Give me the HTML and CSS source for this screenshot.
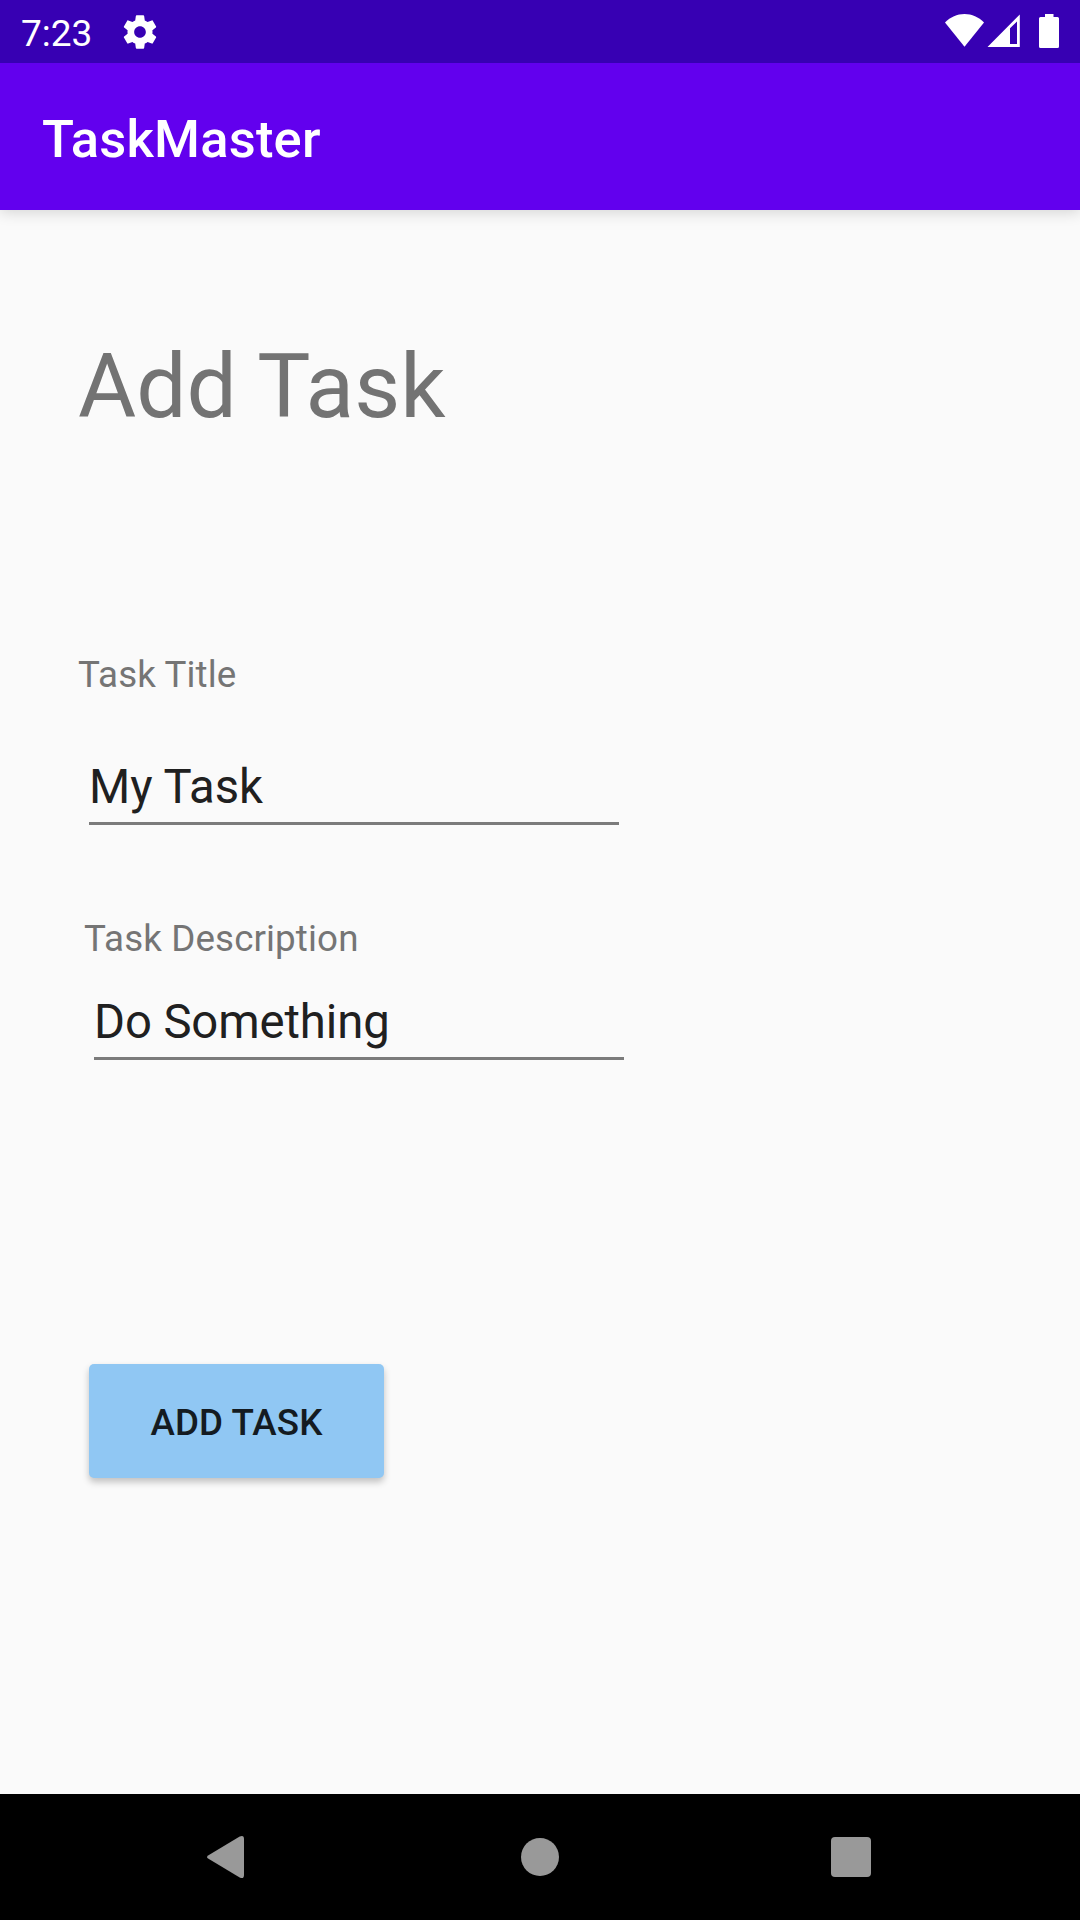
FILE: index.html
```html
<!DOCTYPE html>
<html lang="en">
<head>
<meta charset="utf-8">
<title>TaskMaster</title>
<link rel="stylesheet" href="styles.css">
</head>
<body>
<div class="screen">
  <div class="status-bar">
    <span class="clock">7:23</span>
    <svg class="gear" viewBox="0 0 24 24"><path d="M19.43 12.98c.04-.32.07-.64.07-.98s-.03-.66-.07-.98l2.11-1.65c.19-.15.24-.42.12-.64l-2-3.46c-.12-.22-.39-.3-.61-.22l-2.49 1c-.52-.4-1.08-.73-1.69-.98l-.38-2.65C14.46 2.18 14.25 2 14 2h-4c-.25 0-.46.18-.49.42l-.38 2.65c-.61.25-1.17.59-1.69.98l-2.49-1c-.23-.09-.49 0-.61.22l-2 3.46c-.13.22-.07.49.12.64l2.11 1.65c-.04.32-.07.65-.07.98s.03.66.07.98l-2.11 1.65c-.19.15-.24.42-.12.64l2 3.46c.12.22.39.3.61.22l2.49-1c.52.4 1.08.73 1.69.98l.38 2.65c.03.24.24.42.49.42h4c.25 0 .46-.18.49-.42l.38-2.65c.61-.25 1.17-.59 1.69-.98l2.49 1c.23.09.49 0 .61-.22l2-3.46c.12-.22.07-.49-.12-.64l-2.11-1.65zM12 15.5c-1.93 0-3.5-1.57-3.5-3.5s1.57-3.5 3.500-3.500 3.500 1.570 3.500 3.500-1.570 3.500-3.500 3.500z"/></svg>
    <svg class="indicators" viewBox="0 0 116 36">
      <path d="M0 9.5C5.500 4 12 1 19.500 1S33.500 4 39 9.500L19.500 33.700z"/>
      <path fill-rule="evenodd" d="M42.500 34L74.800 1.500V34zM65 15.200V31h7V8.500z"/>
      <path d="M100 1h8.500v3h4a1.500 1.500 0 0 1 1.500 1.500v28a1.500 1.500 0 0 1-1.500 1.500h-17a1.500 1.500 0 0 1-1.500-1.500v-28a1.500 1.500 0 0 1 1.500-1.500h4.500z"/>
    </svg>
  </div>
  <header class="app-bar"><span class="app-title">TaskMaster</span></header>
  <main class="content">
    <h1 class="heading">Add Task</h1>
    <div class="field">
      <label class="label" for="title">Task Title</label>
      <input class="input" id="title" type="text" value="My Task">
    </div>
    <div class="field field-description">
      <label class="label" for="description">Task Description</label>
      <input class="input input-description" id="description" type="text" value="Do Something">
    </div>
    <button class="button" type="button">ADD TASK</button>
  </main>
  <nav class="nav-bar">
    <svg class="nav-icon" viewBox="0 0 48 48"><path d="M3.500 22.200L34.700 3.500Q39 1.500 39 6V42Q39 46.500 34.700 44.500L3.500 25.800Q.5 24 3.500 22.200z"/></svg>
    <svg class="nav-icon" viewBox="0 0 48 48"><circle cx="24" cy="24" r="19"/></svg>
    <svg class="nav-icon" viewBox="0 0 48 48"><rect x="4" y="4" width="40" height="40" rx="4"/></svg>
  </nav>
</div>
</body>
</html>
```
FILE: styles.css
```css
* { box-sizing: border-box; }
body {
  margin: 0;
  background: #fafafa;
  font-family: Roboto, sans-serif;
}
.screen {
  width: 1080px;
  height: 1920px;
  display: flex;
  flex-direction: column;
  overflow: hidden;
}
.status-bar {
  position: relative;
  z-index: 1;
  height: 63px;
  background: #3700b3;
  color: #fff;
  display: flex;
  padding: 0 19px 0 21px;
}
.status-bar svg { fill: #fff; }
.clock {
  width: 99px;
  font-size: 37px;
  line-height: 44px;
  padding-top: 12px;
}
.gear { width: 40px; height: 40px; margin-top: 12px; }
.indicators { width: 116px; height: 36px; margin: 13px 0 0 auto; }
.app-bar {
  height: 147px;
  padding: 0 42px;
  background: #6200ee;
  color: #fff;
  display: flex;
  align-items: center;
  box-shadow: 0 2px 14px rgba(0, 0, 0, .16);
}
.app-title {
  font-size: 52.5px;
  font-weight: 500;
  line-height: 62px;
  letter-spacing: .2px;
  padding-top: 4px;
}
.content {
  flex: 1;
  display: flex;
  flex-direction: column;
  align-items: flex-start;
  padding: 124px 78px 0;
}
.heading {
  margin: 0 0 214px;
  font-size: 89.25px;
  font-weight: 400;
  line-height: 105px;
  color: #737373;
}
.field {
  display: flex;
  flex-direction: column;
  gap: 62px;
}
.field-description { gap: 33px; margin: 92px 0 0 5px; }
.label {
  font-size: 36.75px;
  line-height: 44px;
  letter-spacing: .12px;
  color: #757575;
}
.field-description .label { padding-left: 1px; }
.input {
  width: 530px;
  height: 66px;
  margin-left: 11px;
  padding: 0 0 7px;
  border: 0;
  border-bottom: 3px solid #7b7b7b;
  border-radius: 0;
  outline: 0;
  background: none;
  font: 47.25px/56px Roboto, sans-serif;
  color: #202020;
}
.input-description { letter-spacing: -.1px; }
.button {
  width: 295px;
  height: 114px;
  margin: 304px 0 0 11px;
  padding: 3px 0 0;
  border: 0;
  border-radius: 5px;
  background: #90c7f3;
  box-shadow: 0 4px 7px rgba(0, 0, 0, .23);
  font: 500 36.75px/44px Roboto, sans-serif;
  letter-spacing: .1px;
  color: #141b21;
}
.nav-bar {
  height: 126px;
  padding: 0 205px;
  background: #000;
  display: flex;
  align-items: center;
  justify-content: space-between;
}
.nav-icon { width: 48px; height: 48px; fill: #999; }
```
